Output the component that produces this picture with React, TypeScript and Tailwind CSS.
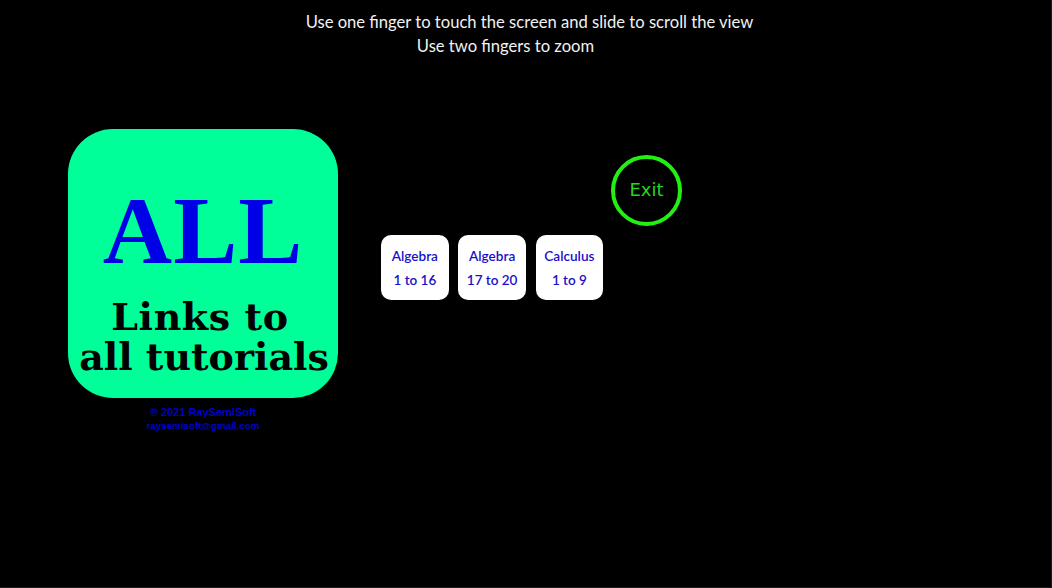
const links = [
  { title: "Algebra", range: "1 to 16" },
  { title: "Algebra", range: "17 to 20" },
  { title: "Calculus", range: "1 to 9" },
];

export default function App() {
  return (
    <div className="h-[588px] w-[1052px] overflow-hidden bg-black border-r border-b border-[#1c1c1c] font-['Lato',sans-serif]">
      {/* Hint text */}
      <div className="ml-[8px] flex h-[129px] flex-col items-center pt-[10px] text-[16.6px] leading-[24px] text-[#f2f2f2]">
        <p>Use one finger to touch the screen and slide to scroll the view</p>
        <p className="pr-[48px]">Use two fingers to zoom</p>
      </div>

      <div className="flex pl-[68px]">
        {/* Tutorial card */}
        <div className="w-[270px]">
          <div className="flex h-[269px] flex-col items-center rounded-[45px] bg-[#00ff99]">
            <div className="mt-[47px] font-['Liberation_Serif',serif] text-[96px] font-bold leading-[110px] tracking-[1px] text-[#0000e6]">ALL</div>
            <div className="mr-[6px] mt-[11px] font-['DejaVu_Serif',serif] text-[38px] font-bold leading-[40px] tracking-[0.6px] text-black">Links to</div>
            <div className="ml-[2px] whitespace-nowrap font-['DejaVu_Serif',serif] text-[38px] font-bold leading-[40px] text-black">all tutorials</div>
          </div>
          <div className="mt-[8px] text-center font-['Liberation_Sans',sans-serif] font-bold leading-[13px] text-[#0000c8]">
            <p className="text-[11px]">© 2021 RaySemiSoft</p>
            <p className="text-[9.8px]">raysemisoft@gmail.com</p>
          </div>
        </div>

        {/* Links and exit */}
        <div className="ml-[43px] pt-[26px]">
          <div className="ml-[230px] flex h-[71px] w-[71px] items-center justify-center rounded-full border-4 border-[#22f012] pb-[3px] font-['DejaVu_Sans',sans-serif] text-[18px] text-[#22d81a]">
            Exit
          </div>
          <div className="mt-[9px] flex gap-[9.6px]">
            {links.map((link, i) => (
              <div
                key={i}
                className="flex h-[65px] w-[67.7px] flex-col items-center justify-center gap-[4px] rounded-[10px] bg-white leading-[20px] font-semibold text-[#1a0fc8]"
              >
                <span className="text-[13.6px]">{link.title}</span>
                <span className="text-[13.5px]">{link.range}</span>
              </div>
            ))}
          </div>
        </div>
      </div>
    </div>
  );
}
